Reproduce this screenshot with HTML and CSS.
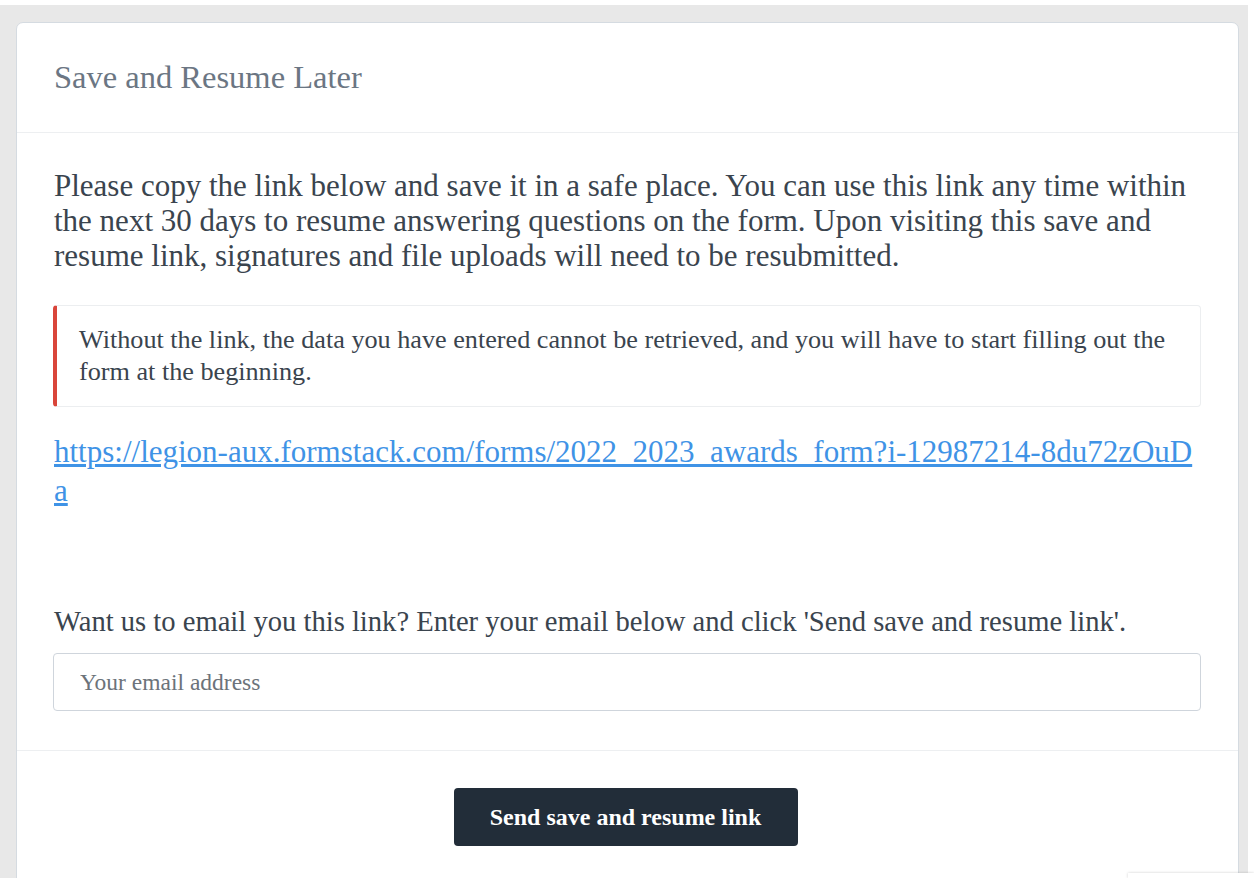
FILE: index.html
```html
<!DOCTYPE html>
<html lang="en">
<head>
  <meta charset="UTF-8">
  <meta name="viewport" content="width=device-width, initial-scale=1.0">
  <title>Save and Resume Later</title>
  <link rel="stylesheet" href="styles.css">
</head>
<body>
<div class="page">
  <div class="card">
    <div class="card-header">
      <h2>Save and Resume Later</h2>
    </div>
    <div class="card-body">
      <p class="intro">Please copy the link below and save it in a safe place. You can use this link any time within the next 30 days to resume answering questions on the form. Upon visiting this save and resume link, signatures and file uploads will need to be resubmitted.</p>
      <div class="notice">
        Without the link, the data you have entered cannot be retrieved, and you will have to start filling out the form at the beginning.
      </div>
      <a class="resume-link" href="#">https://legion-aux.formstack.com/forms/2022_2023_awards_form?i-12987214-8du72zOuDa</a>
      <label class="email-label" for="email">Want us to email you this link? Enter your email below and click 'Send save and resume link'.</label>
      <input type="email" id="email" placeholder="Your email address">
    </div>
    <div class="card-footer">
      <button type="button">Send save and resume link</button>
    </div>
  </div>
</div>
<div class="badge"></div>
</body>
</html>
```

FILE: styles.css
```css
body {
  margin: 0;
  padding: 5px 0 0;
  background: #fff;
  font-family: "Liberation Serif", "Times New Roman", serif;
  color: #3a444e;
  overflow: hidden;
}

.page {
  width: 1248px;
  height: 873px;
  box-sizing: border-box;
  background: #e8e8e8;
  padding: 17px 9px 0 16px;
  overflow: hidden;
}

.card {
  background: #fff;
  border: 1px solid #d5dbe1;
  border-radius: 7px;
  height: 880px;
}

.card-header {
  height: 109px;
  padding: 0 37px;
  border-bottom: 1px solid #edeff1;
  display: flex;
  align-items: center;
}

.card-header h2 {
  margin: 0;
  font-size: 32.5px;
  font-weight: normal;
  color: #6b7683;
}

.card-body {
  padding: 35px 37px 39px 36px;
  display: flex;
  flex-direction: column;
}

.intro {
  margin: 0 0 32px 1px;
  font-size: 31px;
  line-height: 35px;
}

.notice {
  border: 1px solid #eceef0;
  border-left: 4px solid #d9453a;
  border-radius: 4px;
  padding: 18px 24px 18px 22px;
  font-size: 26.2px;
  line-height: 32px;
  margin-bottom: 25px;
}

.resume-link {
  margin-left: 1px;
  font-size: 31px;
  line-height: 39px;
  color: #3f93e6;
  word-break: break-all;
  margin-bottom: 95px;
}

.email-label {
  margin-left: 1px;
  font-size: 28.6px;
  line-height: 34px;
  margin-bottom: 14px;
}

input {
  height: 58px;
  box-sizing: border-box;
  border: 1px solid #cfd5dc;
  border-radius: 4px;
  padding: 0 26px;
  font-family: "Liberation Serif", "Times New Roman", serif;
  font-size: 23.5px;
  color: #3a444e;
}

input::placeholder {
  color: #6c737a;
}

.card-footer {
  border-top: 1px solid #edeff1;
  padding: 37px 4px 0 0;
  display: flex;
  justify-content: center;
}

button {
  background: #222d39;
  color: #fff;
  border: none;
  border-radius: 4px;
  width: 344px;
  height: 58px;
  font-family: "Liberation Serif", "Times New Roman", serif;
  font-size: 24px;
  font-weight: bold;
}

.badge {
  position: absolute;
  left: 1128px;
  top: 873px;
  width: 126px;
  height: 5px;
  background: #fff;
  box-shadow: 0 0 3px rgba(0, 0, 0, 0.2);
}
```
